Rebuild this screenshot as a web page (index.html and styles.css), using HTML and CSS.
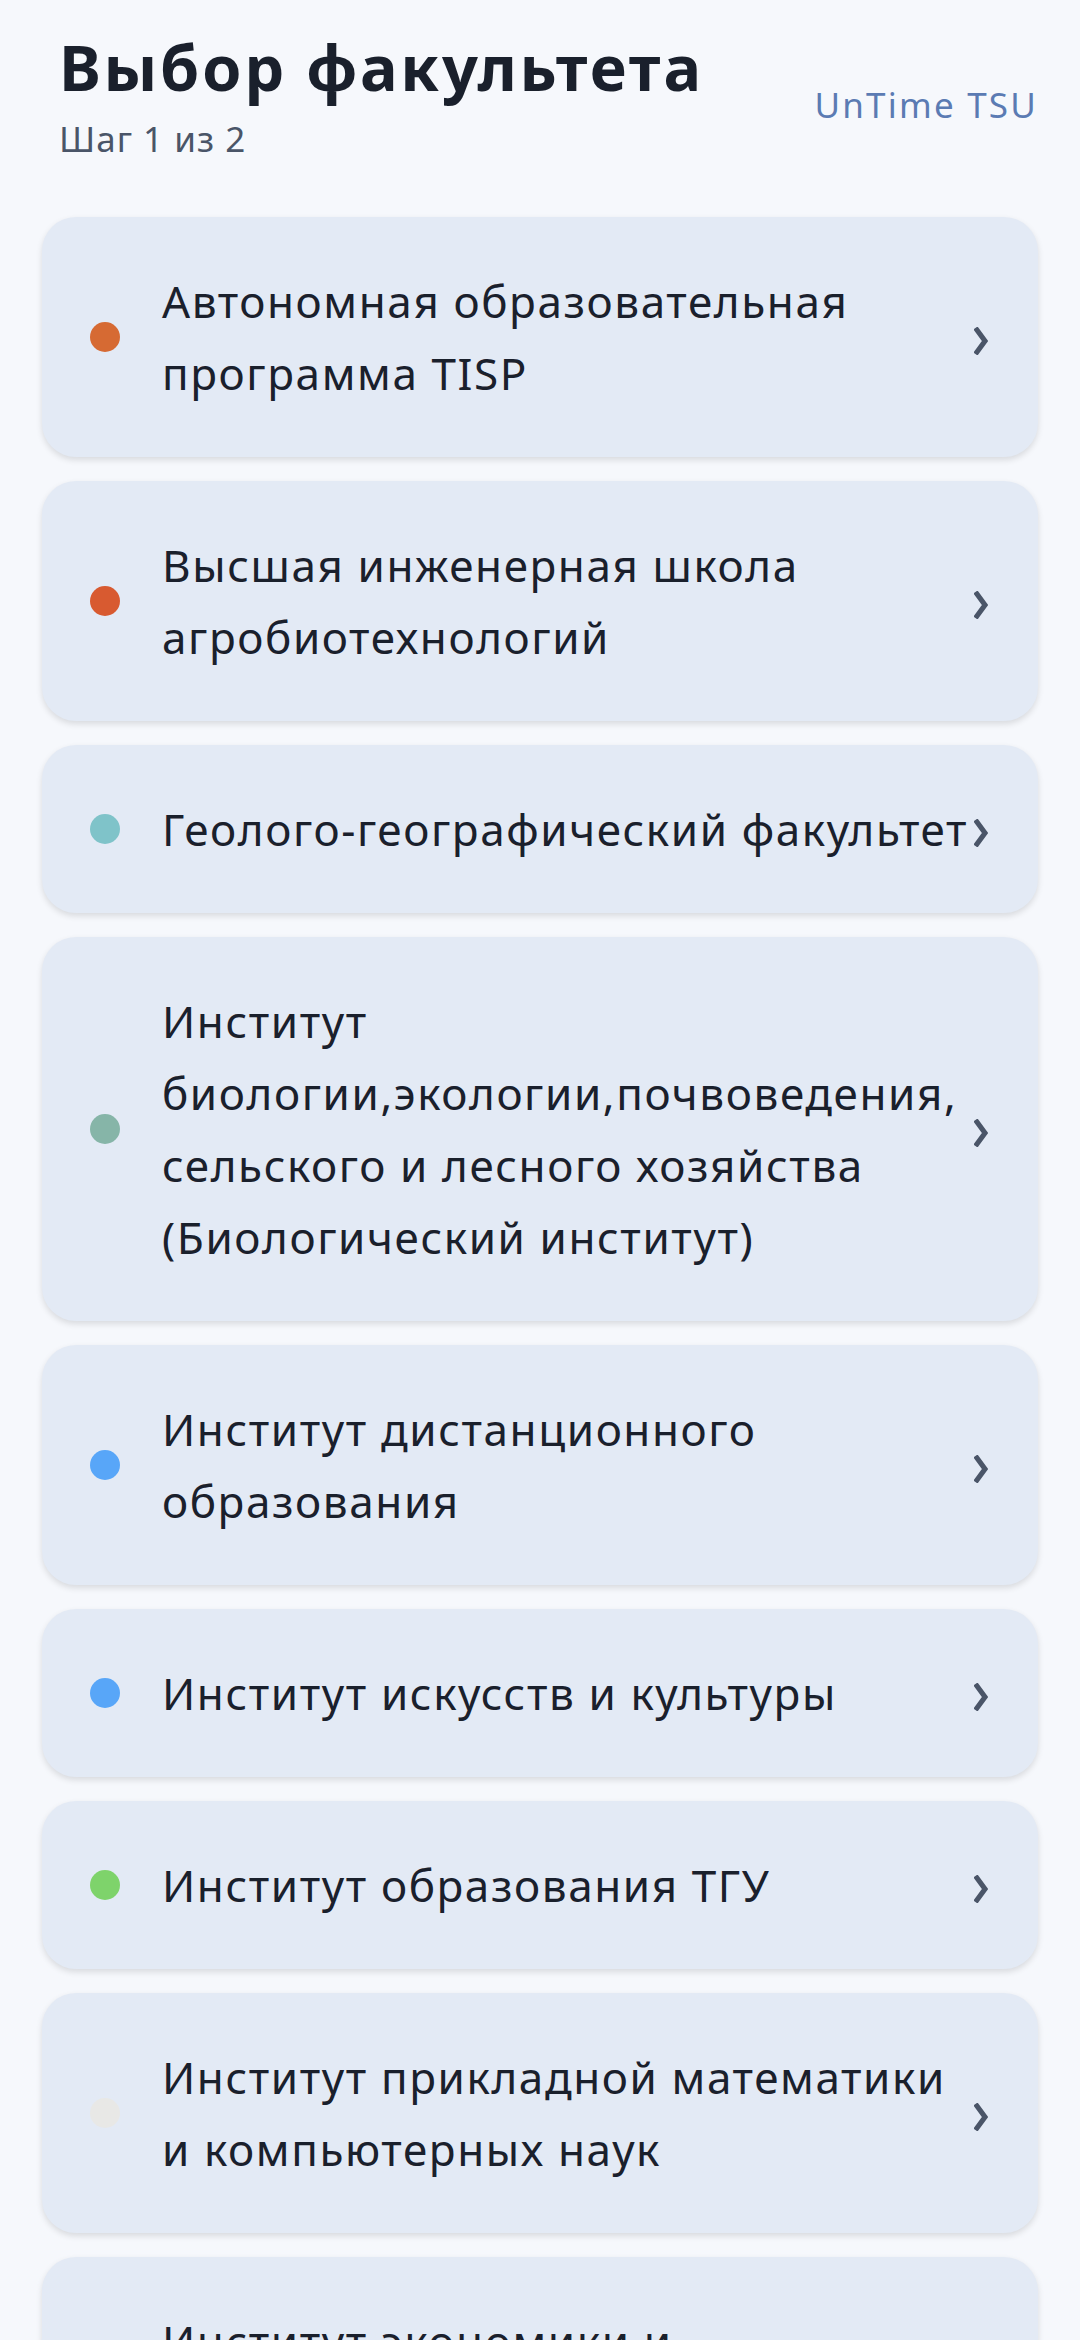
FILE: index.html
```html
<!DOCTYPE html>
<html lang="ru">
<head>
  <meta charset="UTF-8" />
  <meta name="viewport" content="width=device-width, initial-scale=1.0"/>
  <title>Выбор факультета</title>
  <link rel="stylesheet" href="styles.css">
</head>
<body>

  <header>
    <div class="heading">
      <h1>Выбор факультета</h1>
      <p class="step">Шаг 1 из 2</p>
    </div>
    <span class="brand">UnTime TSU</span>
  </header>

  <div class="list">
    <a class="card" href="#">
      <span class="dot dot-orange"></span>
      <span class="name">Автономная образовательная программа TISP</span>
      <svg class="chevron" viewBox="0 0 14 28"><polyline points="3,3 11,14 3,25"/></svg>
    </a>
    <a class="card" href="#">
      <span class="dot dot-red"></span>
      <span class="name">Высшая инженерная школа агробиотехнологий</span>
      <svg class="chevron" viewBox="0 0 14 28"><polyline points="3,3 11,14 3,25"/></svg>
    </a>
    <a class="card" href="#">
      <span class="dot dot-teal"></span>
      <span class="name">Геолого-географический факультет</span>
      <svg class="chevron" viewBox="0 0 14 28"><polyline points="3,3 11,14 3,25"/></svg>
    </a>
    <a class="card" href="#">
      <span class="dot dot-sage"></span>
      <span class="name">Институт биологии,экологии,почвоведения, сельского и лесного хозяйства (Биологический институт)</span>
      <svg class="chevron" viewBox="0 0 14 28"><polyline points="3,3 11,14 3,25"/></svg>
    </a>
    <a class="card" href="#">
      <span class="dot dot-blue"></span>
      <span class="name">Институт дистанционного образования</span>
      <svg class="chevron" viewBox="0 0 14 28"><polyline points="3,3 11,14 3,25"/></svg>
    </a>
    <a class="card" href="#">
      <span class="dot dot-blue"></span>
      <span class="name">Институт искусств и культуры</span>
      <svg class="chevron" viewBox="0 0 14 28"><polyline points="3,3 11,14 3,25"/></svg>
    </a>
    <a class="card" href="#">
      <span class="dot dot-green"></span>
      <span class="name">Институт образования ТГУ</span>
      <svg class="chevron" viewBox="0 0 14 28"><polyline points="3,3 11,14 3,25"/></svg>
    </a>
    <a class="card" href="#">
      <span class="dot dot-grey"></span>
      <span class="name">Институт прикладной математики и компьютерных наук</span>
      <svg class="chevron" viewBox="0 0 14 28"><polyline points="3,3 11,14 3,25"/></svg>
    </a>
    <a class="card" href="#">
      <span class="dot dot-gold"></span>
      <span class="name">Институт экономики и менеджмента</span>
      <svg class="chevron" viewBox="0 0 14 28"><polyline points="3,3 11,14 3,25"/></svg>
    </a>
  </div>

</body>
</html>
```

FILE: styles.css
```css
* {
  margin: 0;
  padding: 0;
  box-sizing: border-box;
  font-family: 'Noto Sans', 'Open Sans', sans-serif;
}

body {
  background-color: #f6f8fc;
  color: #1a202c;
  padding: 0 42px;
}

header {
  display: flex;
  justify-content: space-between;
  align-items: center;
  padding: 30px 0 0 17px;
}

h1 {
  font-size: 63px;
  font-weight: 700;
  line-height: 74px;
  letter-spacing: 2.8px;
  color: #1a202c;
  margin-bottom: 12px;
}

.step {
  font-size: 35px;
  line-height: 46px;
  letter-spacing: 1px;
  color: #4a5568;
}

.brand {
  font-size: 35px;
  line-height: 44px;
  letter-spacing: 2.2px;
  color: #5b7bb3;
  margin-top: 18px;
}

.list {
  display: flex;
  flex-direction: column;
  gap: 24px;
  margin-top: 55px;
}

.card {
  display: flex;
  align-items: center;
  padding: 48px 50px 48px 48px;
  background-color: #e3eaf5;
  border-radius: 34px;
  box-shadow: 0 3px 6px rgba(0, 0, 0, 0.12);
  text-decoration: none;
  color: #1a202c;
}

.dot {
  width: 30px;
  height: 30px;
  border-radius: 50%;
  flex-shrink: 0;
  margin-right: 42px;
}

.dot-orange { background-color: #d66a33; }
.dot-red { background-color: #d85a30; }
.dot-teal { background-color: #7fc3c9; }
.dot-sage { background-color: #86b5a8; }
.dot-blue { background-color: #58a6f8; }
.dot-green { background-color: #7ed36b; }
.dot-grey { background-color: #e8e8e6; }
.dot-gold { background-color: #d9a441; }

.name {
  flex: 1;
  font-size: 44px;
  line-height: 72px;
  letter-spacing: 1.6px;
}

.chevron {
  width: 14px;
  height: 28px;
  flex-shrink: 0;
  margin-top: 8px;
  fill: none;
  stroke: #4a5568;
  stroke-width: 5;
  stroke-linecap: square;
}
```
